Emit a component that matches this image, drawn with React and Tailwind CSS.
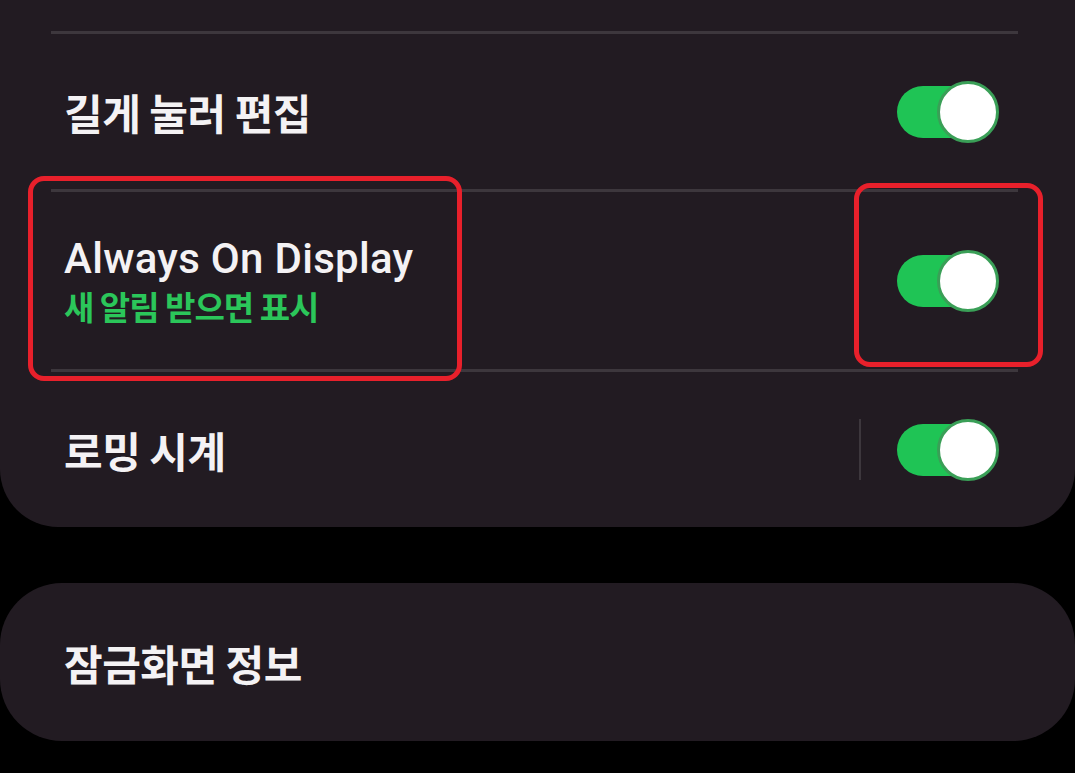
const Toggle = () => (
  <div className="relative w-[102px] h-[62px] shrink-0">
    <div className="absolute left-0 top-[5px] h-[52px] w-[90px] rounded-full bg-[#1fc455]" />
    <div className="absolute right-0 top-0 w-[62px] h-[62px] rounded-full bg-white border-[3px] border-[#3a9f57]" />
  </div>
);

const Divider = () => (
  <div className="pl-[51px] pr-[57px]">
    <div className="h-[3px] bg-[#3d373d]" />
  </div>
);

const korean = { fontFamily: '"Noto Sans CJK KR", "Noto Sans", sans-serif' };
const latin = { fontFamily: 'Roboto, "Noto Sans CJK KR", sans-serif' };

export default function App() {
  return (
    <div className="relative w-[1075px] h-[773px] bg-black overflow-hidden">
      <div className="bg-[#221b22] rounded-b-[58px] pt-[31px]">
        <Divider />
        <div className="h-[155px] flex items-center justify-between pl-[64px] pr-[76px]">
          <span
            style={korean}
            className="text-[42px] font-bold tracking-[-0.5px] text-[#f4f2f4]"
          >
            길게 눌러 편집
          </span>
          <Toggle />
        </div>
        <Divider />
        <div className="h-[177px] flex items-center justify-between pl-[64px] pr-[76px]">
          <div className="flex flex-col">
            <span
              style={latin}
              className="text-[42px] font-medium leading-[50px] tracking-[0.3px] text-[#f4f2f4]"
            >
              Always On Display
            </span>
            <span
              style={korean}
              className="text-[33px] font-bold leading-[44px] tracking-[-1px] text-[#2bc65a]"
            >
              새 알림 받으면 표시
            </span>
          </div>
          <Toggle />
        </div>
        <Divider />
        <div className="h-[155px] flex items-center pl-[64px] pr-[76px]">
          <span
            style={korean}
            className="flex-1 text-[42px] font-bold tracking-[-0.5px] text-[#f4f2f4]"
          >
            로밍 시계
          </span>
          <div className="w-[2px] h-[61px] bg-[#3d373d] mr-[36px]" />
          <Toggle />
        </div>
      </div>

      <div className="mt-[56px] h-[158px] bg-[#221b22] rounded-[62px] flex items-center pl-[64px]">
        <span
          style={korean}
          className="text-[42px] font-bold tracking-[-0.5px] text-[#f4f2f4]"
        >
          잠금화면 정보
        </span>
      </div>

      <div className="absolute left-[28px] top-[176px] w-[434px] h-[205px] border-[5px] border-[#e8202b] rounded-[16px]" />
      <div className="absolute left-[854px] top-[183px] w-[189px] h-[184px] border-[5px] border-[#e8202b] rounded-[16px]" />
    </div>
  );
}
